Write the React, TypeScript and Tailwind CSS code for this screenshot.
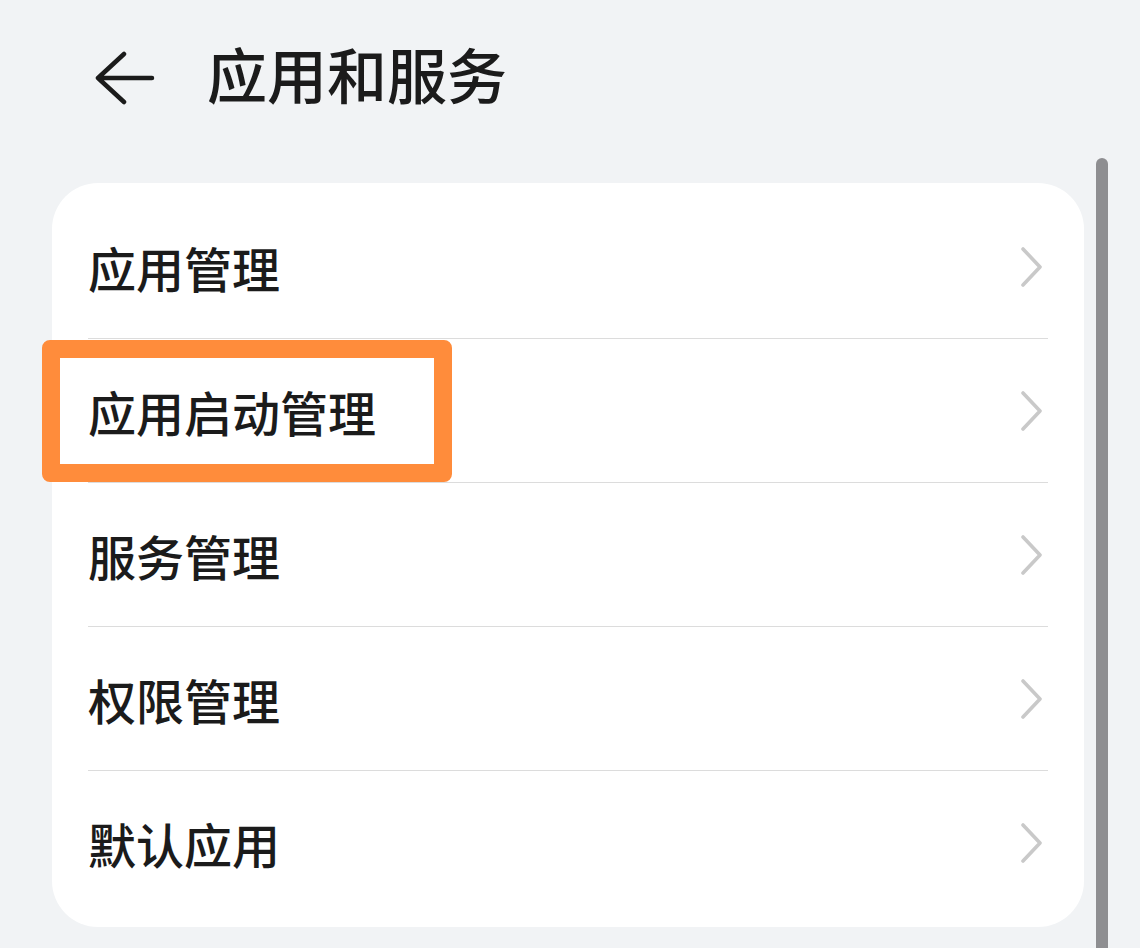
import React from "react";

const items = ["应用管理", "应用启动管理", "服务管理", "权限管理", "默认应用"];

function Chevron() {
  return (
    <svg width="24" height="40" viewBox="0 0 24 40" fill="none" className="mr-[4px]">
      <path d="M3 2 L20 20 L3 38" stroke="#c9c9c9" strokeWidth="3.6" strokeLinecap="round" strokeLinejoin="round" />
    </svg>
  );
}

export default function App() {
  return (
    <div className="relative h-[948px] w-[1140px] overflow-hidden bg-[#f1f3f5] font-['Noto_Sans_CJK_SC',sans-serif] text-[#1b1b1b]">
      {/* Header */}
      <div className="flex h-[154px] items-center pl-[93px]">
        <svg width="62" height="54" viewBox="0 0 62 54" fill="none" className="mt-[2px]">
          <path d="M31 3 L5 27 L31 51 M5 27 H59" stroke="#1b1b1b" strokeWidth="4.5" strokeLinecap="round" strokeLinejoin="round" />
        </svg>
        <h1 className="mb-[8px] ml-[52px] text-[60px] font-medium leading-none">应用和服务</h1>
      </div>

      {/* Card */}
      <div className="ml-[52px] mt-[29px] w-[1032px] rounded-[46px] bg-white px-[36px] py-[12px]">
        {items.map((label, i) => (
          <div
            key={label}
            className={`relative flex h-[144px] items-center justify-between ${i < items.length - 1 ? "border-b border-[#dcdcdc]" : ""}`}
          >
            <span className="text-[48px] font-medium leading-none">{label}</span>
            <Chevron />
            {i === 1 && (
              <div className="pointer-events-none absolute left-[-46px] top-[1px] h-[142px] w-[410px] rounded-[8px] border-[18px] border-[#ff8c3b]" />
            )}
          </div>
        ))}
      </div>

      {/* Scrollbar */}
      <div className="absolute bottom-0 left-[1096px] top-[158px] w-[12px] rounded-t-full bg-[#8e8e91]" />
    </div>
  );
}
